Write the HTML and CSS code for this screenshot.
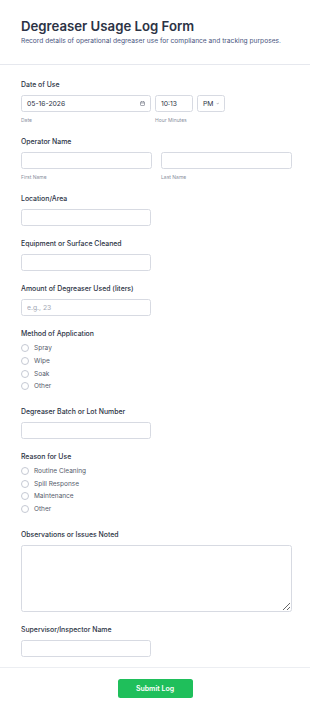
FILE: index.html
```html
<!DOCTYPE html>
<html lang="en">
<head>
    <meta charset="UTF-8">
    <title>Degreaser Usage Log Form</title>
    <link rel="stylesheet" href="styles.css">
</head>
<body>
    <!-- Form Header -->
    <div class="form-header">
        <h1>Degreaser Usage Log Form</h1>
        <p class="subtitle">Record details of operational degreaser use for compliance and tracking purposes.</p>
    </div>

    <form class="form-body">
        <div class="field">
            <label class="field-label">Date of Use</label>
            <div class="row">
                <div class="col-date">
                    <div class="box box-date">
                        <span>05-16-2026</span>
                        <svg class="cal-icon" viewBox="0 0 10 10" width="5" height="5">
                            <rect x="1" y="1.5" width="8" height="7.5" rx="1" fill="none" stroke="#555b6b" stroke-width="1"/>
                            <line x1="1" y1="4" x2="9" y2="4" stroke="#555b6b" stroke-width="1"/>
                            <line x1="3" y1="0.5" x2="3" y2="2.5" stroke="#555b6b" stroke-width="1"/>
                            <line x1="7" y1="0.5" x2="7" y2="2.5" stroke="#555b6b" stroke-width="1"/>
                        </svg>
                    </div>
                    <div class="sublabel">Date</div>
                </div>
                <div class="col-time">
                    <div class="box box-time"><span>10:13</span></div>
                    <div class="sublabel">Hour Minutes</div>
                </div>
                <div class="col-ampm">
                    <div class="box box-ampm">
                        <span>PM</span>
                        <svg viewBox="0 0 10 10" width="5" height="5">
                            <polyline points="2,3.5 5,6.5 8,3.5" fill="none" stroke="#555b6b" stroke-width="1.2"/>
                        </svg>
                    </div>
                </div>
            </div>
        </div>

        <div class="field">
            <label class="field-label">Operator Name</label>
            <div class="row two-col">
                <div>
                    <input type="text" class="input full">
                    <div class="sublabel">First Name</div>
                </div>
                <div>
                    <input type="text" class="input full">
                    <div class="sublabel">Last Name</div>
                </div>
            </div>
        </div>

        <div class="field">
            <label class="field-label">Location/Area</label>
            <input type="text" class="input half">
        </div>

        <div class="field">
            <label class="field-label">Equipment or Surface Cleaned</label>
            <input type="text" class="input half">
        </div>

        <div class="field">
            <label class="field-label">Amount of Degreaser Used (liters)</label>
            <input type="text" class="input half" placeholder="e.g., 23">
        </div>

        <div class="field field-radio">
            <label class="field-label">Method of Application</label>
            <div class="radio"><span class="dot"></span>Spray</div>
            <div class="radio"><span class="dot"></span>Wipe</div>
            <div class="radio"><span class="dot"></span>Soak</div>
            <div class="radio"><span class="dot"></span>Other</div>
        </div>

        <div class="field">
            <label class="field-label">Degreaser Batch or Lot Number</label>
            <input type="text" class="input half">
        </div>

        <div class="field field-radio">
            <label class="field-label">Reason for Use</label>
            <div class="radio"><span class="dot"></span>Routine Cleaning</div>
            <div class="radio"><span class="dot"></span>Spill Response</div>
            <div class="radio"><span class="dot"></span>Maintenance</div>
            <div class="radio"><span class="dot"></span>Other</div>
        </div>

        <div class="field">
            <label class="field-label">Observations or Issues Noted</label>
            <textarea class="textarea"></textarea>
        </div>

        <div class="field last">
            <label class="field-label">Supervisor/Inspector Name</label>
            <input type="text" class="input half">
        </div>
    </form>

    <!-- Submit Area -->
    <div class="form-footer">
        <button type="button" class="submit-btn">Submit Log</button>
    </div>
</body>
</html>
```

FILE: styles.css
```css
/* General Page Styling */
body {
    font-family: 'Inter', 'Liberation Sans', sans-serif;
    background-color: #fff;
    margin: 0;
    padding: 0;
    color: #2c3345;
}

/* Header */
.form-header {
    padding: 17px 18px 18px 21px;
    border-bottom: 1px solid #e6e8ee;
}

h1 {
    font-size: 13.2px;
    font-weight: 600;
    line-height: 18px;
    margin: 0;
    color: #2c3345;
}

.subtitle {
    font-size: 6.65px;
    line-height: 9px;
    margin: 2px 0 0;
    color: #4a5680;
}

/* Form Body */
.form-body {
    padding: 15px 18px 10px 21px;
    border-bottom: 1px solid #eceef2;
}

.field {
    margin-bottom: 13px;
}

.field.last {
    margin-bottom: 0;
}

.field-label {
    display: block;
    font-size: 6.9px;
    font-weight: 500;
    line-height: 10px;
    margin-bottom: 5px;
}

.row {
    display: flex;
    gap: 4px;
}

.two-col {
    gap: 9px;
}

.two-col > div {
    flex: 1;
}

.col-date {
    width: 130px;
}

.col-time {
    width: 38px;
}

.box {
    box-sizing: border-box;
    height: 17px;
    border: 1px solid #d7dae2;
    border-radius: 2.5px;
    display: flex;
    align-items: center;
    font-size: 6.8px;
    color: #2c3345;
}

.box-date {
    justify-content: space-between;
    padding: 0 5px 0 5px;
}

.box-time {
    padding: 0 5px;
}

.box-ampm {
    width: 28px;
    padding: 0 4px 0 5px;
    gap: 3px;
}

.sublabel {
    font-size: 5px;
    line-height: 8px;
    margin-top: 4px;
    color: #8a90a0;
}

.input {
    box-sizing: border-box;
    display: block;
    height: 17px;
    border: 1px solid #d7dae2;
    border-radius: 2.5px;
    padding: 0 5px;
    font-family: inherit;
    font-size: 6.8px;
    color: #2c3345;
    margin: 0;
    outline: none;
}

.input::placeholder {
    color: #a3a8b5;
}

.input.half {
    width: 130px;
}

.input.full {
    width: 100%;
}

.textarea {
    box-sizing: border-box;
    display: block;
    width: 100%;
    height: 67px;
    border: 1px solid #d7dae2;
    border-radius: 2.5px;
    margin: 0;
    resize: vertical;
}

/* Radio Options */
.field-radio .field-label {
    margin-bottom: 3px;
}

.field-radio {
    margin-bottom: 14px;
}

.radio {
    display: flex;
    align-items: center;
    height: 12.7px;
    font-size: 6.5px;
    color: #545a6a;
}

.dot {
    box-sizing: border-box;
    width: 8px;
    height: 8px;
    border: 1px solid #c5c9d3;
    border-radius: 50%;
    margin-right: 5px;
}

/* Footer */
.form-footer {
    padding: 7px 0 17px;
    text-align: center;
}

.submit-btn {
    background-color: #1fbf5b;
    color: #fff;
    font-family: inherit;
    font-size: 7px;
    font-weight: 600;
    width: 75px;
    height: 19px;
    border: none;
    border-radius: 2.5px;
    cursor: pointer;
}
```
